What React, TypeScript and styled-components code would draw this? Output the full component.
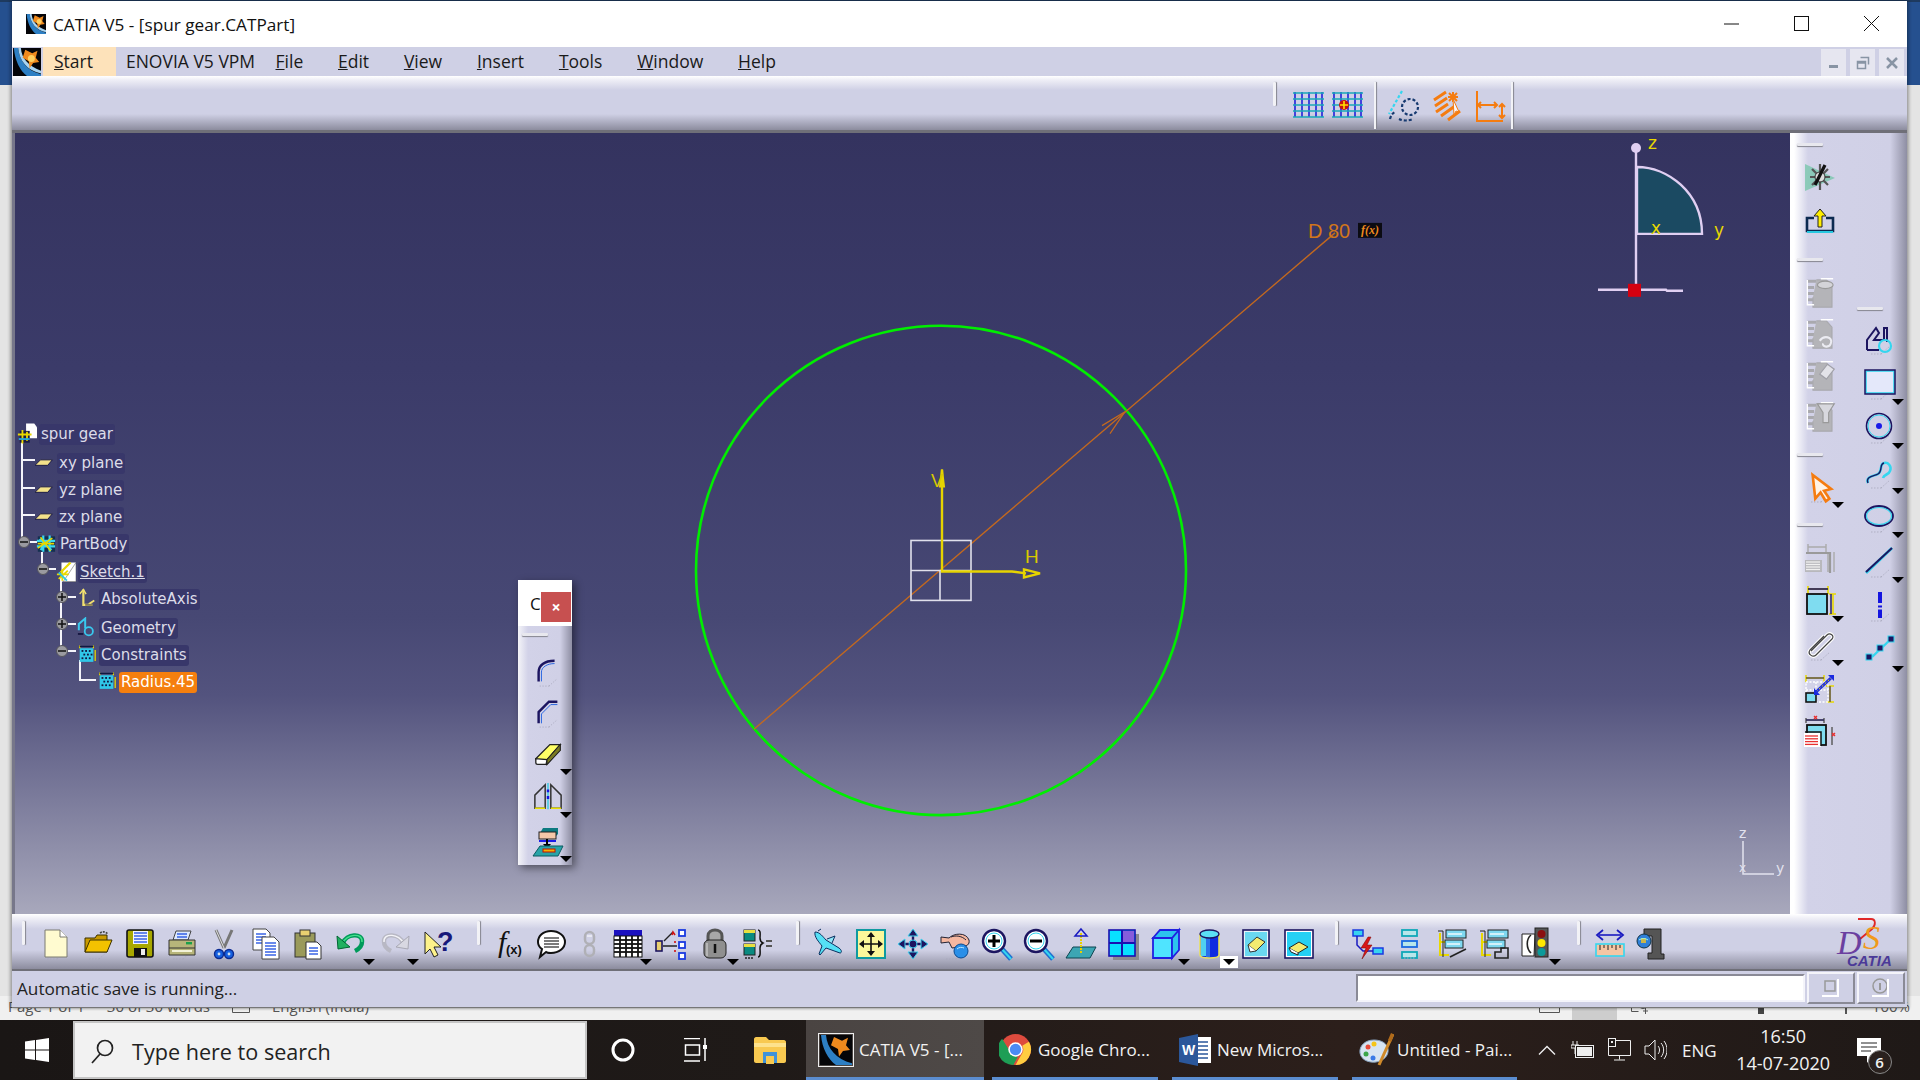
import React from 'react';
import styled, { createGlobalStyle } from 'styled-components';

const Global = createGlobalStyle`
  html, body { margin: 0; padding: 0; width: 1920px; height: 1080px; overflow: hidden; background: #f0f0f0; }
  #root { width: 1920px; height: 1080px; }
`;
const UI = `"Open Sans", "Noto Sans", "Liberation Sans", sans-serif`;
const Screen = styled.div`width:1920px;height:1080px;display:grid;grid-template-rows:1020px 60px;font-family:${UI};overflow:hidden;`;
const Desktop = styled.div`display:flex;flex-direction:column;background:linear-gradient(to bottom,#1e3a5f 0,#1e3a5f 2px,#25508f 2px,#25508f 85px,#e4e4e4 85px);`;
const Win = styled.div`position:relative;z-index:1;flex:none;margin:1px 13px 0 12px;height:1007px;display:flex;flex-direction:column;background:#cfd0e5;box-shadow:-2px 0 3px rgba(0,0,0,.3),2px 0 3px rgba(0,0,0,.3);border-bottom:1px solid #777;box-sizing:border-box;`;
const TitleBar = styled.div`height:46px;flex:none;background:#fff;display:flex;align-items:center;padding-left:14px;font-size:17.2px;color:#111;`;
const Caption = styled.span`margin-left:7px;`;
const WinControls = styled.div`margin-left:auto;display:flex;height:100%;`;
const WinBtn = styled.div`width:70px;display:flex;align-items:center;justify-content:center;`;
const MenuBar = styled.div`height:29px;flex:none;display:flex;align-items:stretch;background:#cfd0e5;font-size:17.5px;color:#1a1a1a;`;
const MenuLogo = styled.div`width:30px;margin-left:1px;display:flex;align-items:center;`;
const MenuItem = styled.div<{$active?:boolean;$pad:string}>`display:flex;align-items:center;padding:${p=>p.$pad};background:${p=>p.$active?'#fde2ba':'transparent'};`;
const MiniControls = styled.div`margin-left:auto;display:flex;gap:4px;padding:2px 3px 0 0;`;
const MiniBtn = styled.div`width:25px;background:#e6e6f0;display:flex;align-items:center;justify-content:center;`;
const TopBar = styled.div`height:57px;flex:none;box-sizing:border-box;border-bottom:3px solid #6f6f78;display:flex;align-items:flex-start;justify-content:flex-end;padding:6px 394px 0 0;background:linear-gradient(to bottom,#fff 0,#eeeef6 4px,#cfd0e5 14px,#cfd0e5 38px,#8c8c9e 54px);`;
const Middle = styled.div`flex:1;min-height:0;display:flex;padding-left:3px;background:#77778a;`;
const Canvas = styled.div`position:relative;flex:1;overflow:hidden;background:linear-gradient(to bottom,#34335f 0,#3b3b69 30%,#474874 62%,#53537e 72%,#8a8aa6 90%,#a8a8bc 100%);`;
const Drawing = styled.svg`position:absolute;inset:0;width:100%;height:100%;`;
const Side = styled.div`width:117px;flex:none;display:flex;background:linear-gradient(to right,#fff 0,#fff 4px,#d2d2e8 18px,#d0d0e6 100px,#8e8ea3 117px);`;
const SideCol = styled.div<{$w:number;$top:number}>`width:${p=>p.$w}px;flex:none;display:flex;flex-direction:column;padding-top:${p=>p.$top}px;`;
const Cell = styled.div<{$w:number;$h:number}>`position:relative;flex:none;width:${p=>p.$w}px;height:${p=>p.$h}px;display:flex;align-items:center;justify-content:center;svg{overflow:visible;}`;
const DropMark = styled.span<{$white?:boolean}>`position:absolute;left:50%;top:50%;margin:15px 0 0 12px;width:0;height:0;border:6px solid transparent;border-top:6px solid #000;border-bottom:0;${p=>p.$white?'outline:3px solid #fff;background:#fff;':''}`;
const HGrip = styled.div<{$ml:number;$mt:number;$mb:number;$w?:number}>`flex:none;width:${p=>p.$w??26}px;height:3px;margin:${p=>p.$mt}px 0 ${p=>p.$mb}px ${p=>p.$ml}px;background:#e8e8ee;box-shadow:0 1px 1px #85858f;border-radius:1px;`;
const VGrip = styled.div<{$ml:number;$mr:number;$mt?:number}>`flex:none;align-self:flex-start;width:3px;height:24px;margin:${p=>p.$mt??0}px ${p=>p.$mr}px 0 ${p=>p.$ml}px;background:#f2f2f6;box-shadow:1px 0 1px #85858f;border-radius:1px;`;
const VSep = styled.div<{$ml:number;$mr:number}>`flex:none;width:2px;height:47px;margin:0 ${p=>p.$mr}px 0 ${p=>p.$ml}px;background:#f2f2f6;box-shadow:1px 0 1px #85858f;`;
const TopTools = styled.div`display:flex;align-items:center;height:47px;`;
const BottomBar = styled.div`height:57px;flex:none;box-sizing:border-box;border-bottom:2px solid #6f6f78;display:flex;align-items:flex-start;padding:9px 0 0 10px;background:linear-gradient(to bottom,#fff 0,#f0f0f7 4px,#cfd0e5 15px,#cfd0e5 36px,#8c8c9e 55px);`;
const BGroup = styled.div`display:flex;align-items:center;height:42px;`;
const DSBox = styled.div`margin-left:auto;margin-right:9px;margin-top:-5px;`;
const StatusBar = styled.div`flex:none;height:36px;display:flex;align-items:center;padding:0 2px 2px 5px;box-sizing:border-box;font-size:17.2px;color:#222;`;
const StatusInput = styled.div`margin-left:auto;width:449px;height:28px;box-sizing:border-box;background:#fff;border:2px solid;border-color:#8a8a96 #f4f4fa #f4f4fa #8a8a96;`;
const StatusBtn = styled.div`width:48px;height:32px;margin-left:2px;box-sizing:border-box;border:2px solid;border-color:#f4f4fa #8a8a96 #8a8a96 #f4f4fa;display:flex;align-items:center;justify-content:center;`;
const FloatBar = styled.div`position:absolute;left:503px;top:447px;width:54px;height:285px;display:flex;flex-direction:column;box-shadow:3px 3px 8px rgba(0,0,0,.45);background:linear-gradient(to right,#f4f4f8 0,#d2d2e8 10px,#d0d0e6 42px,#8e8ea3 54px);`;
const FloatHead = styled.div`height:46px;flex:none;background:#fff;display:flex;align-items:center;padding:0 1px 0 12px;font-size:17px;color:#111;justify-content:space-between;`;
const FloatClose = styled.div`width:30px;height:30px;margin-top:8px;background:#c75050;color:#fff;font-size:16px;font-weight:700;display:flex;align-items:center;justify-content:center;`;
const Tree = styled.div`position:absolute;left:0;top:288px;width:240px;font-family:"DejaVu Sans",sans-serif;font-size:15px;color:#dcdce8;`;
const TreeLines = styled.svg`position:absolute;left:0;top:0;`;
const TreeRow = styled.div<{$indent:number;$mb?:number}>`position:relative;height:27.1px;display:flex;align-items:center;gap:2px;padding-left:${p=>p.$indent}px;margin-bottom:${p=>p.$mb??0}px;`;
const TreeLabel = styled.span<{$on?:boolean;$ul?:boolean}>`padding:0 2px;height:21px;line-height:21px;border-radius:3px;white-space:nowrap;background:${p=>p.$on?'#f57f0e':'#38376a'};color:${p=>p.$on?'#fff':'#dcdce8'};${p=>p.$ul?'text-decoration:underline;':''}`;
const WordStrip = styled.div`position:relative;z-index:0;margin-top:-12px;height:24px;flex:none;box-sizing:border-box;background:#f0f0f0;display:flex;align-items:center;padding:0 10px 4px 0;font-size:15px;color:#555;overflow:hidden;`;
const WordText = styled.span<{$ml:number}>`margin-left:${p=>p.$ml}px;white-space:nowrap;`;
const WordGlyph = styled.svg<{$ml:string}>`flex:none;margin-left:${p=>p.$ml};`;
const WordTile = styled.span`flex:none;margin:-4px 0 -4px 12px;width:45px;height:28px;background:#cdcdcd;`;
const Taskbar = styled.div`display:flex;align-items:stretch;background:linear-gradient(to right,#1a1615 0,#1f1a18 40%,#2c1f1b 70%,#1f1917 100%);color:#f2f2f2;font-size:17px;`;
const TaskCell = styled.div<{$w:number}>`width:${p=>p.$w}px;flex:none;display:flex;align-items:center;justify-content:center;`;
const SearchBox = styled.div`width:514px;flex:none;box-sizing:border-box;margin:1px 0;border:2px solid #c5c5c5;background:#f2f2f2;display:flex;align-items:center;padding:2px 0 0 15px;gap:17px;color:#222;font-size:21.6px;`;
const AppBtn = styled.div<{$w:number;$ml:number;$active?:boolean;$gap?:number}>`width:${p=>p.$w}px;margin-left:${p=>p.$ml}px;flex:none;box-sizing:border-box;border-bottom:3px solid #5b8dd0;display:flex;align-items:center;gap:${p=>p.$gap??6}px;padding:2px 0 0 ${p=>p.$active?12:7}px;background:${p=>p.$active?'linear-gradient(to right,#4a4442,#4e4947)':'transparent'};white-space:nowrap;`;
const Tray = styled.div`flex:1;display:flex;align-items:center;`;
const TrayIcon = styled.div<{$ml:number}>`margin-left:${p=>p.$ml}px;display:flex;align-items:center;`;
const Clock = styled.div`margin-left:19px;width:95px;display:flex;flex-direction:column;align-items:center;gap:3px;padding-bottom:2px;font-size:18px;line-height:24px;`;
const Notify = styled.div`position:relative;margin-left:26px;width:36px;height:36px;box-sizing:border-box;padding-top:6px;`;
const Badge = styled.span`position:absolute;right:1px;bottom:-6px;width:24px;height:24px;border-radius:50%;border:1px solid #888;background:#2a211e;box-sizing:border-box;display:flex;align-items:center;justify-content:center;font-size:15px;font-weight:600;`;

const Sh = () => <path d="M7 31h12M17 31l9-8" stroke="#a8a8bc" strokeDasharray="1.5 1.5" fill="none" opacity=".8" />;
const N = '#1c1560', C = '#35d6ef';
const lines = (x: number, y: number, w: number, n: number, c = '#1a4be0', gap = 3) => Array.from({ length: n }, (_, i) => <path key={i} d={`M${x} ${y + i * gap}h${w}`} stroke={c} strokeWidth="1.3" />);
const grid = (c1: string, c2: string) => <g strokeWidth="1.5">{[3, 10, 17, 24, 30].map(v => <path key={v} d={`M${v} 2V27`} stroke={c1} />)}{[3, 9, 15, 21, 27].map(v => <path key={v} d={`M1 ${v}H32`} stroke={c2} />)}</g>;
const grayBase = <g fill="none" stroke="#a9a9ae"><path d="M3 5h8M3 10h6M3 15h8M3 20h6" strokeWidth="2.4" /><path d="M11 4h9l5 5v17H8V18" fill="#b4b4b8" strokeWidth="1" /><path d="M3 4v20h6" stroke="#fff" strokeWidth="1.2" /><path d="M15 3h11" stroke="#fff" strokeWidth="1.2" /></g>;
const Tall = ({ children }: { children: React.ReactNode }) => <g transform="translate(0 -1) scale(1.12 1.24)">{children}</g>;

const icons: Record<string, React.ReactNode> = {
  new: <><Sh /><path d="M5 2h15l7 7v20H5z" fill="#fffbd0" stroke="#7b7b70" /><path d="M20 2v7h7" fill="#fff" stroke="#7b7b70" /></>,
  open: <><Sh /><path d="M3 10h10l2-3h10v17H3z" fill="#c99a00" stroke="#3a3000" /><path d="M18 5c3-2 6-1 8 1" stroke="#444" fill="none" strokeDasharray="2 1" strokeWidth="1.6" /><path d="M3 24l5-12h22l-5 12z" fill="#f3c200" stroke="#3a3000" /></>,
  save: <><rect x="3" y="2" width="26" height="27" rx="2" fill="#a8a800" stroke="#111" strokeWidth="1.6" /><rect x="9" y="3" width="15" height="13" fill="#f2f4ff" />{lines(10, 5, 13, 4)}<rect x="10" y="20" width="13" height="9" fill="#111" /><rect x="17" y="21" width="4" height="6" fill="#eee" /></>,
  print: <><Sh /><path d="M10 3h15l-3 9H7z" fill="#dce8ff" stroke="#444" />{lines(11, 6, 10, 2)}<path d="M3 12h26v15H3z" fill="#b7b57a" stroke="#333" /><path d="M3 20h26" stroke="#333" /><rect x="20" y="14" width="6" height="2.4" fill="#1aa04a" /><path d="M6 23h20" stroke="#f2f2d8" strokeWidth="2" /></>,
  cut: <><path d="M8 2l8 18M24 2l-8 18" stroke="#777" strokeWidth="3" fill="none" /><path d="M8 2l8 18" stroke="#ddd" strokeWidth="1" /><circle cx="11" cy="26" r="4.5" fill="#1660e0" stroke="#0b2a90" strokeWidth="1.4" /><circle cx="21" cy="26" r="4.5" fill="#1660e0" stroke="#0b2a90" strokeWidth="1.4" /><circle cx="11" cy="26" r="1.4" fill="#cde" /><circle cx="21" cy="26" r="1.4" fill="#cde" /></>,
  copy: <><path d="M3 1h13l4 4v17H3z" fill="#fff" stroke="#444" />{lines(6, 6, 10, 4)}<path d="M12 9h12l5 5v17H12z" fill="#fff" stroke="#444" />{lines(15, 15, 11, 5)}</>,
  paste: <><rect x="3" y="5" width="20" height="24" fill="#9a9a5a" stroke="#333" /><rect x="8" y="2" width="10" height="6" fill="#e8d070" stroke="#333" /><path d="M14 14h11l4 4v13H14z" fill="#fff" stroke="#333" />{lines(17, 20, 9, 3)}</>,
  undo: <><path d="M8 15c3-9 20-11 19-1 0 4-3 7-7 9" stroke="#009a5a" strokeWidth="4.4" fill="none" /><path d="M8 15c3-9 20-11 19-1" stroke="#45e08c" strokeWidth="1.4" fill="none" /><path d="M2 8l1 13 12-2z" fill="#20b060" stroke="#063" /></>,
  redo: <><path d="M24 15c-3-9-20-11-19-1 0 4 3 7 7 9" stroke="#b8b8c4" strokeWidth="4.4" fill="none" /><path d="M24 15c-3-9-20-11-19-1" stroke="#f4f4f8" strokeWidth="1.4" fill="none" /><path d="M30 8l-1 13-12-2z" fill="#d8d8e2" stroke="#a8a8b4" /></>,
  help: <><path d="M2 4v22l5-5 4 8 4-2-4-8h7z" fill="#fdf28a" stroke="#222" /><text x="14" y="23" fontFamily="Liberation Sans,sans-serif" fontWeight="700" fontSize="27" fill="#17187a">?</text></>,
  fx: <><text x="4" y="24" fontFamily="Liberation Serif,serif" fontStyle="italic" fontSize="30" fill="#111">f</text><text x="12" y="26" fontFamily="Liberation Sans,sans-serif" fontWeight="700" fontSize="13" fill="#111">(x)</text></>,
  comment: <><path d="M15 3c8 0 14 5 14 11s-6 11-14 11c-2 0-4 0-5-1l-6 5 2-8C3 19 2 17 2 14 2 8 7 3 15 3z" fill="#fff" stroke="#111" strokeWidth="2" />{lines(8, 10, 15, 4, '#333', 3)}</>,
  chain: <><g fill="none" stroke="#b0b0b6" strokeWidth="2.5"><rect x="11" y="4" width="9" height="12" rx="4.5" /><rect x="11" y="17" width="9" height="11" rx="4.5" /></g><path d="M13 8h5" stroke="#fff" /></>,
  table: <><rect x="2" y="2" width="28" height="6" fill="#1a10c0" /><rect x="2" y="8" width="28" height="21" fill="#fff" stroke="#111" /><g stroke="#111" strokeWidth="1.8">{[8, 14, 20, 26].map(v => <path key={v} d={`M${v} 8v21`} />)}{[12, 16, 20, 24].map(v => <path key={v} d={`M2 ${v}h28`} />)}</g></>,
  nodes: <><rect x="1" y="13" width="6" height="10" fill="#e8d070" stroke={N} strokeWidth="1.6" />{[[24, 2], [24, 14], [24, 25]].map(([x, y]) => <rect key={y} x={x} y={y} width="6" height="6" fill="#fff" stroke="#1a3ae0" strokeWidth="1.8" />)}<path d="M8 18h14M9 13l9-9" stroke="#222" strokeWidth="1.4" /><path d="M17 7l1-3 2 3M20 13v2M20 22v2" stroke="#d01010" strokeWidth="1.6" fill="none" /></>,
  lock: <><path d="M9 14V8c0-8 14-8 14 0v6" fill="#a8a8a8" stroke="#555" strokeWidth="3" /><rect x="5" y="12" width="22" height="18" rx="5" fill="#8f8f8f" stroke="#222" /><path d="M16 16v9" stroke="#111" strokeWidth="2.5" /><path d="M8 15v13" stroke="#ddd" /></>,
  formula: <><rect x="2" y="2" width="11" height="11" fill="#0a8a80" stroke="#222" /><rect x="2" y="2" width="11" height="3" fill="#e8e040" /><rect x="2" y="16" width="11" height="11" fill="#0a8a80" stroke="#222" /><rect x="2" y="16" width="11" height="3" fill="#e8e040" /><path d="M16 2c3 0 2 5 2 8s1 4 3 5c-2 1-3 2-3 5s1 9-2 9" fill="none" stroke="#111" strokeWidth="1.5" /><path d="M24 13h6M24 18h6" stroke="#555" strokeWidth="1.8" /><path d="M3 30h8" stroke="#222" strokeDasharray="2 1" strokeWidth="1.6" /></>,
  fly: <><Sh /><path d="M2 4c5 0 8 5 11 8l13 8c3 2 3 5 1 5L13 20 7 27l-1-1 3-8C6 14 1 9 2 4z" fill="#55e0f5" stroke="#0a3060" /><path d="M14 11l8-3-3 7M5 3l3-2" stroke="#0a3060" fill="#8fe8f8" /></>,
  fit: <><rect x="2" y="2" width="28" height="28" fill="#fbf79a" stroke="#0f9aa0" strokeWidth="2" /><g stroke="#111" strokeWidth="1.6"><path d="M16 6v20M6 16h20" /></g><g fill="#111"><path d="M16 4l4 5h-8zM16 28l4-5h-8zM4 16l5-4v8zM28 16l-5-4v8z" /></g></>,
  pan: <><path d="M16 6v20M6 16h20" stroke={N} strokeWidth="2.4" /><g fill={N} stroke="#3fd0ec"><path d="M16 1l5 7H11zM16 31l5-7H11zM1 16l7-5v10zM31 16l-7-5v10z" /><circle cx="16" cy="16" r="4" /></g></>,
  rotate: <><Sh /><path d="M2 9l8 1c5-5 17-6 20 2 1 5-3 6-5 6l-5 1-7 1-3-6-8 1z" fill="#f5b7a0" stroke="#223" /><path d="M12 9c5-2 11-1 15 3" stroke="#223" fill="none" /><circle cx="22" cy="23" r="7" fill="#2a8fe8" stroke="#0b4a90" /><path d="M18 21c2-2 5-2 7-1" stroke="#bfe8ff" fill="none" /></>,
  zoomin: <><path d="M20 20l10 11" stroke="#1f6fd0" strokeWidth="5" /><path d="M20 20l10 11" stroke={C} strokeWidth="2" /><circle cx="13" cy="13" r="11" fill="#fff" stroke={N} strokeWidth="2.4" /><circle cx="13" cy="13" r="8" fill="none" stroke={C} /><path d="M7 13h12M13 7v12" stroke="#000" strokeWidth="3" /></>,
  zoomout: <><path d="M20 20l10 11" stroke="#1f6fd0" strokeWidth="5" /><path d="M20 20l10 11" stroke={C} strokeWidth="2" /><circle cx="13" cy="13" r="11" fill="#fff" stroke={N} strokeWidth="2.4" /><circle cx="13" cy="13" r="8" fill="none" stroke={C} /><path d="M7 13h12" stroke="#000" strokeWidth="3" /></>,
  normal: <><path d="M1 30l7-11h23l-6 11z" fill="#3ca6b4" stroke="#0d4450" /><path d="M16 5v20" stroke="#e8d000" strokeWidth="2" strokeDasharray="2 1" /><path d="M16 1l6 7h-12z" fill="none" stroke="#1a1ac0" strokeWidth="1.5" /></>,
  views: <><rect x="6" y="6" width="26" height="26" fill="#8a8a90" /><rect x="2" y="2" width="26" height="26" fill="#08e0ff" stroke="#1a10b0" strokeWidth="1.6" /><path d="M15 2v26M2 15h26" stroke="#1a10b0" strokeWidth="2" /><rect x="16" y="3" width="11" height="11" fill="#b030d0" opacity=".75" /></>,
  cube: <><path d="M3 10h19v20H3z" fill="#4fe4ff" stroke="#2020e0" strokeWidth="1.8" /><path d="M3 10l7-8h19l-7 8zM22 10l7-8v20l-7 8z" fill="#2cc4ee" stroke="#2020e0" strokeWidth="1.8" /></>,
  cyl: <><path d="M5 6v21c0 4 19 4 19 0V6" fill="#0f2ce0" stroke="#e8e060" strokeWidth="1.6" /><rect x="6" y="6" width="5" height="22" fill="#50d0f0" /><rect x="11" y="6" width="4" height="23" fill="#2a70ea" /><ellipse cx="14.5" cy="6" rx="9.5" ry="4" fill="#5be0f5" stroke={N} strokeWidth="1.4" /></>,
  hide: <><rect x="3" y="2" width="26" height="28" fill="#e8f4f8" stroke={N} strokeWidth="1.6" /><rect x="5" y="4" width="22" height="24" fill="#6ad8f0" /><path d="M8 17l9-8 8 5-9 9z" fill="#f4ec70" stroke="#333" /><path d="M8 17l2 7 6-1" fill="#fff" stroke="#333" /></>,
  show: <><rect x="2" y="2" width="28" height="28" fill="#fff" stroke={N} strokeWidth="1.6" /><rect x="4" y="4" width="24" height="24" fill="#25d0f4" /><path d="M6 20l10-6 9 5-10 6z" fill="#f4ec70" stroke="#222" /><path d="M6 20l2 4 7 3v-2" fill="#fff" stroke="#222" /></>,
  flash: <><rect x="1" y="2" width="10" height="6" fill="#38d4ef" stroke="#1a3ae0" strokeWidth="1.5" /><rect x="21" y="20" width="10" height="6" fill="#38d4ef" stroke="#1a3ae0" strokeWidth="1.5" /><path d="M5 8v9l6 6h10" stroke="#1a1ac0" fill="none" strokeWidth="1.5" /><path d="M16 9L9 20h5l-4 11 10-14h-5l4-8z" fill="#d81818" stroke="#700" strokeWidth=".5" /></>,
  stack: <>{[2, 13, 24].map(y => <g key={y}><rect x="8" y={y} width="15" height="6" fill="#b8e6ea" stroke={y === 13 ? '#1a6ae0' : '#10a8b8'} strokeWidth="1.8" /></g>)}<path d="M10 30h11" stroke="#a8a8bc" strokeDasharray="1.5 1.5" /></>,
  steps1: <><path d="M4 5v22h9M4 14h7" stroke="#e8d800" strokeWidth="2" fill="none" /><path d="M2 3h5v26" stroke="#222" fill="none" /><rect x="10" y="2" width="20" height="8" fill="#7fd8f0" stroke="#222" /><rect x="9" y="12" width="18" height="8" fill="#7fd8f0" stroke="#222" />{lines(12, 6, 14, 1, '#fff')}{lines(11, 16, 13, 1, '#fff')}<path d="M14 29l16-8" stroke="#222" strokeWidth="1.6" /></>,
  steps2: <><path d="M4 5v22h9M4 14h7" stroke="#e8d800" strokeWidth="2" fill="none" /><path d="M2 3h5v26" stroke="#222" fill="none" /><rect x="10" y="2" width="20" height="8" fill="#7fd8f0" stroke="#222" /><rect x="9" y="12" width="18" height="8" fill="#7fd8f0" stroke="#222" />{lines(12, 6, 14, 1, '#fff')}{lines(11, 16, 13, 1, '#fff')}<path d="M17 30v-6h6v-4h7v10z" fill="none" stroke="#222" strokeWidth="1.6" /></>,
  light: <><path d="M1 6h13l-1 22H1z" fill="#fff" stroke="#222" /><path d="M10 7C5 11 5 20 10 25" stroke="#222" fill="none" strokeWidth="1.6" /><rect x="14" y="0" width="13" height="29" fill="#555" stroke="#222" /><circle cx="20.5" cy="6" r="4" fill="#8a1010" /><circle cx="20.5" cy="15" r="4" fill="#ffe800" /><circle cx="20.5" cy="24" r="4" fill="#0c9a9a" /></>,
  measure: <><path d="M5 7h22" stroke="#1a1ac0" strokeWidth="1.6" /><path d="M9 2L3 7l6 5M23 2l6 5-6 5" stroke="#1a1ac0" fill="none" strokeWidth="1.8" /><rect x="2" y="16" width="28" height="12" fill="#f5c6a4" stroke={C} strokeWidth="1.6" /><path d="M6 17v5M10 17v3M14 17v5M18 17v3M22 17v5M26 17v3" stroke="#222" /></>,
  clamp: <><path d="M8 1h17v25h3v5H12v-6h4V8H8z" fill="#555" stroke="#222" /><circle cx="8" cy="13" r="7" fill="#2f7fd8" stroke="#134" /><path d="M5 10h5v5H5z" fill="#e8c030" opacity=".85" /><path d="M3 12c3-2 6-2 9 0" stroke="#9fe" fill="none" /></>,
  grid: grid('#1414d8', '#18a8b8'),
  gridsnap: <>{grid('#1414d8', '#18a8b8')}<circle cx="13" cy="15" r="5" fill="#c81010" /><path d="M13 11v8M9 15h8" stroke="#ffe000" strokeWidth="1.6" /></>,
  sketchOut: <><g fill="none" strokeDasharray="3 2" strokeWidth="2.2"><path d="M14 1L1 24" stroke={C} /><circle cx="22" cy="17" r="8" stroke="#173a70" /><path d="M2 29c1-4 3-6 5-7M11 29c4 2 9 2 14 0" stroke="#173a70" /></g></>,
  handOrange: <><g stroke="#f57c10" strokeWidth="3" fill="none"><path d="M1 10l12-8M2 16l12-8M3 22l12-8M8 26l14-10M15 30l12-9" /></g><path d="M20 2v10M15 7h10M16 3l8 8M24 3l-8 8" stroke="#f57c10" strokeWidth="2" /><path d="M20 9l6 13-3-1-2 4z" fill="#f8f8ff" stroke="#f57c10" /></>,
  dimsOrange: <><g stroke="#f57c10" strokeWidth="2" fill="none"><path d="M2 1v30h26" /><path d="M4 15h18M6 12l-3 3 3 3M19 12l3 3-3 3" /><path d="M27 14v14M24 17l3-3 3 3M24 25l3 3 3-3" /></g></>,
  star: <><path d="M1 3l30 14L1 30z" fill="#7fc8b0" opacity=".85" /><path d="M16 3v26M6 16h20M8 8l16 16M24 8L8 24" stroke="#555" strokeWidth="2.2" /><circle cx="16" cy="16" r="5" fill="#ddd" stroke="#333" /><path d="M11 24L21 4" stroke="#111" strokeWidth="3.2" /></>,
  exit: <><path d="M10 12H3v13h26V12h-7" fill="none" stroke="#0c2a50" strokeWidth="2.6" /><path d="M3 26h26" stroke="#28c8e0" strokeWidth="2" /><path d="M16 3l-6 7h4v11h4V10h4z" fill="#ffee00" stroke="#222" /></>,
  gray1: <Tall>{grayBase}<ellipse cx="19" cy="8" rx="7" ry="3" fill="#d4d4d8" stroke="#999" /></Tall>,
  gray2: <Tall>{grayBase}<path d="M14 20c4-5 12-3 10 2-1 4-8 3-7 0" stroke="#ececf2" fill="none" strokeWidth="1.8" /></Tall>,
  gray3: <Tall>{grayBase}<path d="M14 13l7-8 6 4-7 8z" fill="#e2e2e8" stroke="#a0a0a8" /></Tall>,
  gray4: <Tall>{grayBase}<path d="M12 4h15l-5 7v8h-5v-8z" fill="#d8d8de" stroke="#999" /></Tall>,
  grayDim: <><g fill="none" stroke="#aaa" strokeWidth="1.4"><path d="M4 2v10M22 2v10M4 5h18M30 10v20M24 10v20" /><path d="M2 11h24v20" stroke="#9a9a9a" strokeWidth="2.2" /></g><rect x="1" y="18" width="17" height="12" fill="#b8b8bc" />{lines(2, 20, 14, 4, '#f0f0f0', 2.5)}</>,
  cursor: <><Sh /><g transform="translate(6 3) scale(.88)"><path d="M3 1l3 27 6-7 6 10 4-3-6-9 8-2z" fill="#fff3e6" stroke="#f57c10" strokeWidth="3" /></g></>,
  cons: <><path d="M4 1v8M24 1v8M4 4h20" stroke="#e8d800" strokeWidth="1.6" /><path d="M4 4h20" stroke={N} strokeWidth="1.6" /><path d="M25 9h7M25 29h7M29 9v20" stroke="#e8d800" strokeWidth="1.6" /><path d="M27 9v20" stroke={N} strokeWidth="1.4" /><rect x="3" y="9" width="20" height="20" fill="#7fdcf0" stroke="#101010" strokeWidth="1.8" /></>,
  clip: <><Sh /><path d="M7 22L23 6c3-3 8 1 5 4L12 26c-3 3-9-1-6-5L20 7" fill="none" stroke="#fff" strokeWidth="3.4" /><path d="M7 22L23 6c3-3 8 1 5 4L12 26c-3 3-9-1-6-5L20 7" fill="none" stroke="#444" strokeWidth="1.2" /></>,
  anim: <><path d="M2 3v7M20 3v7M2 6h18" stroke="#e8d800" strokeWidth="1.5" /><path d="M2 6h18" stroke={N} /><path d="M26 14v16M22 14h8M22 30h8" stroke="#e8d800" strokeWidth="1.5" /><path d="M26 14v16" stroke={N} /><g fill="none" stroke="#fff" strokeDasharray="2 1.5" strokeWidth="1.4"><rect x="2" y="10" width="22" height="20" /><path d="M2 18h22M12 10v20" /></g><rect x="2" y="21" width="10" height="9" fill="#7fdcf0" stroke="#111" strokeWidth="1.6" /><path d="M12 20L27 6" stroke="#1a2ae0" strokeWidth="3" /><path d="M12 20L27 6" stroke="#f0e000" strokeDasharray="2 2" /><path d="M24 3h6v6zM10 23v-7l6 7z" fill="#1a2ae0" /></>,
  red: <><path d="M2 4h18M2 2v5M20 2v5M28 11v18" stroke="#555" strokeWidth="1.4" /><path d="M2 4h18" stroke={N} /><path d="M10 0l3 3M13 0l-3 3M28 17l3 3M31 17l-3 3" stroke="#e83030" strokeWidth="1.4" /><rect x="3" y="9" width="19" height="20" fill="#7fdcf0" stroke="#111" strokeWidth="1.8" /><rect x="0" y="17" width="17" height="14" fill="#fff" /><path d="M1 16h16v14" fill="none" stroke="#111" strokeWidth="1.5" />{lines(1, 20, 13, 4, '#e83030', 2.8)}</>,
  profile: <><Sh /><path d="M3 27V17L12 5l3 5-5 7h10V5h3v14" fill="none" stroke={N} strokeWidth="2" /><circle cx="21" cy="23" r="6" fill="none" stroke={C} strokeWidth="2.2" /><path d="M3 27h12" stroke={N} strokeWidth="2" /></>,
  rect: <><Sh /><rect x="2" y="3" width="28" height="22" fill="#e4e8fa" stroke={C} strokeWidth="1.6" /><rect x="1" y="2" width="30" height="24" fill="none" stroke={N} strokeWidth="1.5" /></>,
  circle: <><Sh /><circle cx="15" cy="14" r="12.5" fill="none" stroke={N} strokeWidth="1.6" /><circle cx="15" cy="14" r="11" fill="none" stroke={C} /><circle cx="15" cy="14" r="3" fill="#1a1ae8" /></>,
  spline: <><Sh /><path d="M4 26c-3-7 7-7 10-9 5-3 1-10 6-11 4-1 8 3 6 8-1 4-6 3-7 7" fill="none" stroke={C} strokeWidth="2.6" /><path d="M4 26c-3-7 7-7 10-9 5-3 1-10 6-11" fill="none" stroke={N} strokeWidth="1.4" /></>,
  ellipse: <><Sh /><ellipse cx="15" cy="15" rx="14" ry="10" fill="none" stroke={N} strokeWidth="1.8" /><ellipse cx="15" cy="15" rx="12.5" ry="8.5" fill="none" stroke={C} strokeWidth="1.2" /></>,
  line: <><Sh /><path d="M2 27L28 2" stroke={C} strokeWidth="3" /><path d="M2 26L28 2" stroke={N} strokeWidth="2" /></>,
  axis: <><Sh /><path d="M16 2v26" stroke="#1414e0" strokeWidth="4" strokeDasharray="11 2.5 2 2" /></>,
  point: <><g transform="translate(0 -2)"><path d="M8 24L27 6" stroke={C} strokeWidth="2.4" /><rect x="2" y="21" width="6" height="6" fill={N} stroke={C} /><rect x="13" y="12" width="6" height="6" fill={N} stroke={C} /><rect x="24" y="3" width="6" height="6" fill={N} stroke={C} /></g></>,
  fillet: <><Sh /><path d="M6 26V16c0-7 6-12 17-12" fill="none" stroke={N} strokeWidth="2.6" /><path d="M9 26V16c0-5 6-9 14-9" fill="none" stroke="#2060e0" /></>,
  chamfer: <><Sh /><path d="M6 27V15L17 4h9" fill="none" stroke={N} strokeWidth="2.6" /><path d="M9 27V17L19 7h7" fill="none" stroke="#2060e0" /></>,
  eraser: <><path d="M3 21L18 6h11L15 22H3z" fill="#ffff66" stroke="#222" strokeWidth="1.4" /><path d="M3 21v4c0 1 1 2 2 2h9l1-5zM15 22v5L29 12V6z" fill="#fff" stroke="#222" strokeWidth="1.4" /><path d="M15 27L29 12V6L15 22z" fill="#7a7a20" stroke="#222" /></>,
  mirror: <><path d="M16 1v28" stroke="#28c8e0" strokeWidth="1.4" /><path d="M16 8v3M16 15v3" stroke="#1414e0" strokeWidth="2.6" /><path d="M13 3v25H2V14z" fill="none" stroke="#333" strokeWidth="1.6" /><path d="M19 3v25h11V14z" fill="none" stroke="#333" strokeWidth="1.6" /><path d="M13 28H2M19 28h11" stroke="#e8e000" strokeWidth="1.6" /></>,
  project: <><path d="M8 8l3-5h15v6l-3 3H8z" fill="#0d7a80" /><rect x="7" y="7" width="17" height="7" fill="#f5c8a8" stroke="#222" /><path d="M7 16h17" stroke="#1a1ae8" strokeWidth="2" /><path d="M15 14v8" stroke="#000" strokeWidth="2" /><path d="M11 19l4 5 4-5z" fill="#000" /><path d="M1 31L8 21h23l-5 10z" fill="#28a4a8" stroke="#0b5a60" /><rect x="11" y="24" width="12" height="3" fill="#f5b000" stroke="#c01000" /></>,
};

type T = { i?: string; w?: number; h?: number; d?: boolean | 'w'; s?: number };
const Tool = ({ i, w = 42, h = 42, d, s = 32 }: T) => (
  <Cell $w={w} $h={h}>
    {i && <svg width={s} height={s} viewBox="0 0 32 32">{icons[i]}</svg>}
    {d && <DropMark $white={d === 'w'} />}
  </Cell>
);

const CatiaLogo = ({ size }: { size: number }) => (
  <svg width={size} height={size} viewBox="0 0 32 32">
    <rect width="32" height="32" fill="#050508" />
    <path d="M6 0c1 14 10 26 26 30v2H16C8 26 2 14 1 0z" fill="#2d7fc4" />
    <path d="M9 0c1 12 8 20 23 26v3C16 26 7 14 6 0z" fill="#a8d4f2" />
    <path d="M14 2l8 4 6-3-2 8 4 5-7 1-4 6-1-8-7-4z" fill="#ef8a1e" />
    <circle cx="21" cy="12" r="4" fill="#ffd060" />
  </svg>
);

const Sketch = () => (
  <Drawing viewBox="15 133 1775 782" preserveAspectRatio="none">
    <circle cx="941" cy="571" r="245" fill="none" stroke="#00ee00" strokeWidth="2.6" />
    <path d="M754 730L1335 233" stroke="#c4691e" strokeWidth="1.4" />
    <path d="M1125 412l-23 14M1125 412l-15 22" stroke="#c4691e" strokeWidth="1.2" fill="none" />
    <g fill="none" stroke="#e0e0ec" strokeWidth="1.6">
      <rect x="911" y="541" width="60" height="60" />
      <path d="M911 571h60M940 571v30" />
    </g>
    <path d="M942 470v102h70l14 2" stroke="#e6d400" strokeWidth="2.4" fill="none" />
    <path d="M1024 570l16 4-16 4z" fill="none" stroke="#e6d400" strokeWidth="2.4" />
    <path d="M940 487l2-17 2 17z" fill="none" stroke="#e6d400" strokeWidth="2" />
    <text x="931" y="487" fontFamily="Liberation Sans,sans-serif" fontSize="18" fill="#d8c800">V</text>
    <text x="1025" y="564" fontFamily="Liberation Sans,sans-serif" fontSize="19" fill="#d8c800">H</text>
    <text x="1308" y="238" fontFamily="Liberation Sans,sans-serif" fontSize="20" fill="#d2761a">D 80</text>
    <rect x="1358" y="223" width="24" height="15" fill="#0b0b12" />
    <text x="1361" y="234" fontFamily="Liberation Serif,serif" fontStyle="italic" fontWeight="700" fontSize="12" fill="#f08a1e">f(x)</text>
    <path d="M1637 234V167c30 0 65 25 65 67z" fill="#1b4a62" stroke="#e0cff2" strokeWidth="2.4" />
    <path d="M1636 148V290M1598 290h68l1 1h16" stroke="#e0cff2" strokeWidth="2.4" fill="none" />
    <circle cx="1636" cy="148" r="5" fill="#e0cff2" />
    <rect x="1628" y="284" width="13" height="13" fill="#d40010" />
    <g fontFamily="DejaVu Sans,sans-serif" fontSize="17" fill="#e8d800">
      <text x="1648" y="149">z</text><text x="1651" y="234">x</text><text x="1714" y="236">y</text>
    </g>
    <path d="M1743 842v33h31" fill="none" stroke="#e2e2ee" strokeWidth="1.5" />
    <g fontFamily="DejaVu Sans,sans-serif" fontSize="14" fill="#e2e2ee">
      <text x="1739" y="839">z</text><text x="1739" y="873" fontSize="12">x</text><text x="1776" y="874">y</text>
    </g>
  </Drawing>
);

const treeIcon: Record<string, React.ReactNode> = {
  root: <><path d="M10 0h9l3 4v12H10z" fill="#fff" /><path d="M3 8h11v13H3z" fill="#1a1a40" /><path d="M1 12h15M6 7v15M11 9v10" stroke="#e8d800" strokeWidth="2" /><path d="M2 17h12" stroke="#2ad" strokeWidth="2" /></>,
  plane: <><path d="M0 14l6-6h13l-5 6z" fill="#f4e28a" stroke="#141440" /></>,
  body: <><path d="M2 3h19v17H2z" fill="#143050" /><path d="M4 6l13 12M16 5L5 18M1 8h20M1 14h20M8 2v18M15 2v18" stroke="#39d7ef" strokeWidth="2.4" /><path d="M2 16l16-11M5 4l11 15M2 11h18" stroke="#e8d800" strokeWidth="1.8" /></>,
  sketch: <><path d="M6 1h16v21H6z" fill="#fff" /><path d="M22 1L8 22h14z" fill="#fff" stroke="#333" strokeWidth=".5" /><path d="M16 1L5 12" stroke="#e8d800" strokeWidth="2.4" /><path d="M1 14h13M7 9v12M3 19l10-9" stroke="#e8d800" strokeWidth="2" /><path d="M3 12l9 9" stroke="#30c8e0" strokeWidth="2" /></>,
  axis: <><path d="M7 1v17h10" stroke="#f2e070" strokeWidth="2.4" fill="none" /><path d="M3 6l4-5 3 5" stroke="#f2e070" strokeWidth="1.6" fill="none" /><path d="M13 17l6-4" stroke="#f2e070" strokeWidth="2" /><path d="M9 18h8" stroke="#151535" strokeWidth="1" /></>,
  geom: <><path d="M2 14V7l7-6v11" fill="none" stroke="#39c8ee" strokeWidth="2.2" /><circle cx="13" cy="15" r="4.5" fill="none" stroke="#39c8ee" strokeWidth="2" /><path d="M1 18h6" stroke="#151540" strokeWidth="2" /></>,
  cons: <><rect x="3" y="4" width="15" height="15" fill="#30c8e8" /><g fill="#101840">{[5, 9, 13].map(x => [6, 10, 14].map(y => <rect key={x + '-' + y} x={x + (y === 10 ? 2 : 0)} y={y} width="2" height="2" />))}</g><path d="M3 1v3M18 1v3M20 6v12" stroke="#e8d800" strokeWidth="1.4" /><path d="M3 2h15" stroke="#101840" strokeWidth="1.4" /></>,
};
const treeRows = [
  ['root', 'spur gear', 2, 2], ['plane', 'xy plane', 20], ['plane', 'yz plane', 20], ['plane', 'zx plane', 20],
  ['body', 'PartBody', 21], ['sketch', 'Sketch.1', 41, 0, 'ul'], ['axis', 'AbsoluteAxis', 62, 2], ['geom', 'Geometry', 62],
  ['cons', 'Constraints', 62], ['cons', 'Radius.45', 82, 0, 'on'],
] as const;

const Node = ({ x, y, plus }: { x: number; y: number; plus?: boolean }) => (
  <g><circle cx={x} cy={y} r="5.5" fill="#9a9aa0" stroke="#55555c" />
    <path d={plus ? `M${x - 4} ${y}h8M${x} ${y - 4}v8` : `M${x - 4} ${y}h8`} stroke="#111" strokeWidth="1.5" /></g>
);

const ProjectTree = () => (
  <Tree>
    <TreeLines width="240" height="300" viewBox="15 421 240 300">
      <g stroke="#f4f4fa" strokeWidth="2" fill="none">
        <path d="M22 440V542M22 460h13M22 488h13M22 515h13M24 542h13" />
        <path d="M42 552V569M43 569h13" />
        <path d="M61 578V651M62 597h14M62 624h14M62 651h14" />
        <path d="M80 660V680h16" />
      </g>
      <Node x={24} y={542} /><Node x={43} y={569} /><Node x={62} y={597} plus /><Node x={62} y={624} plus /><Node x={62} y={651} />
    </TreeLines>
    {treeRows.map((r: any, k) => (
      <TreeRow key={k} $indent={r[2]} $mb={r[3]}>
        <svg width="20" height="23" viewBox="0 0 22 24">{treeIcon[r[0]]}</svg>
        <TreeLabel $on={r[4] === 'on'} $ul={r[4] === 'ul'}>{r[1]}</TreeLabel>
      </TreeRow>
    ))}
  </Tree>
);

const Pal = () => (
  <FloatBar>
    <FloatHead>C<FloatClose>×</FloatClose></FloatHead>
    <HGrip $ml={4} $mt={7} $mb={15} />
    <Tool i="fillet" w={60} h={41} s={30} />
    <Tool i="chamfer" w={60} h={41} s={30} />
    <Tool i="eraser" w={60} h={42} s={30} d />
    <Tool i="mirror" w={60} h={44} s={30} d />
    <Tool i="project" w={60} h={44} s={32} d />
  </FloatBar>
);

const leftA: T[] = [{ i: 'star', h: 42 }, { i: 'exit', h: 48 }];
const leftB: T[] = ['gray1', 'gray2', 'gray3', 'gray4'].map(i => ({ i, h: 41.5 }));
const leftD: T[] = [{ i: 'grayDim' }, { i: 'cons', d: true }, { i: 'clip', d: true }, { i: 'anim' }, { i: 'red' }];
const right: T[] = [{ i: 'profile' }, { i: 'rect', d: true }, { i: 'circle', d: true }, { i: 'spline', d: true }, { i: 'ellipse', d: true }, { i: 'line', d: true }, { i: 'axis' }, { i: 'point', d: true }];

const g1: T[] = [{ i: 'new' }, { i: 'open' }, { i: 'save' }, { i: 'print' }, { i: 'cut' }, { i: 'copy' }, { i: 'paste' }, { i: 'undo', w: 43, d: true }, { i: 'redo', w: 46, d: true }, { i: 'help' }];
const g2: T[] = [{ i: 'fx' }, { i: 'comment' }, { i: 'chain', w: 34 }, { i: 'table', d: true }, { i: 'nodes', w: 44 }, { i: 'lock', w: 43, d: true }, { i: 'formula', w: 44 }];
const g3: T[] = [{ i: 'fly' }, { i: 'fit' }, { i: 'pan' }, { i: 'rotate' }, { i: 'zoomin' }, { i: 'zoomout' }, { i: 'normal' }, { i: 'views' }, { i: 'cube', w: 44, d: true }, { i: 'cyl', w: 46, d: 'w' }, { i: 'hide', w: 44 }, { i: 'show', w: 41 }];
const g4: T[] = [{ i: 'flash' }, { i: 'stack' }, { i: 'steps1' }, { i: 'steps2' }, { i: 'light', w: 44, d: true }];
const g5: T[] = [{ i: 'measure' }, { i: 'clamp' }];
const Run = ({ list, w, h }: { list: T[]; w?: number; h?: number }) => <>{list.map((t, k) => <Tool key={k} w={w} h={h} {...t} />)}</>;

const menu: [string, string][] = [['F', 'ile'], ['E', 'dit'], ['V', 'iew'], ['I', 'nsert'], ['T', 'ools'], ['W', 'indow'], ['H', 'elp']];

const Chrome = () => (
  <svg width="33" height="33" viewBox="0 0 32 32">
    <circle cx="16" cy="16" r="15" fill="#dd4b3e" />
    <path d="M29 8.500A15 15 0 0116 31l6.500-11.250a7.500 7.500 0 000-7.500z" fill="#ffcd40" />
    <path d="M3 5.500l6.500 10.500a7.500 7.500 0 009 6.500L14 31A15 15 0 013 5.500z" fill="#1e9e55" />
    <circle cx="16" cy="16" r="7" fill="#fff" /><circle cx="16" cy="16" r="5.500" fill="#4a8bf5" />
  </svg>
);

export default function App() {
  return (
    <Screen>
      <Global />
      <Desktop>
        <Win>
          <TitleBar>
            <CatiaLogo size={20} />
            <Caption>CATIA V5 - [spur gear.CATPart]</Caption>
            <WinControls>
              <WinBtn><svg width="16" height="16"><path d="M0 8h15" stroke="#111" /></svg></WinBtn>
              <WinBtn><svg width="16" height="16"><rect x=".5" y=".5" width="14" height="14" fill="none" stroke="#111" /></svg></WinBtn>
              <WinBtn><svg width="16" height="16"><path d="M0 0l15 15M15 0L0 15" stroke="#111" /></svg></WinBtn>
            </WinControls>
          </TitleBar>
          <MenuBar>
            <MenuLogo><CatiaLogo size={28} /></MenuLogo>
            <MenuItem $active $pad="0 23px 2px 11px"><span><u>S</u>tart</span></MenuItem>
            <MenuItem $pad="0 3px 2px 10px">ENOVIA V5 VPM</MenuItem>
            {menu.map(([a, b]) => <MenuItem key={a} $pad="0 17.4px 2px"><span><u>{a}</u>{b}</span></MenuItem>)}
            <MiniControls>
              <MiniBtn><svg width="14" height="14"><rect x="2" y="9" width="9" height="3" fill="#8894a4" /></svg></MiniBtn>
              <MiniBtn><svg width="14" height="14"><path d="M4.500 1.500h8v7M1.500 5.500h8v7h-8zM1.500 7h8" fill="none" stroke="#8894a4" strokeWidth="1.500" /></svg></MiniBtn>
              <MiniBtn><svg width="14" height="14"><path d="M2 2l10 10M12 2L2 12" stroke="#8894a4" strokeWidth="2.500" /></svg></MiniBtn>
            </MiniControls>
          </MenuBar>
          <TopBar>
            <TopTools>
              <VGrip $ml={0} $mr={14} />
              <Tool i="grid" w={36} h={36} />
              <Tool i="gridsnap" w={41} h={36} />
              <VSep $ml={7} $mr={6} />
              <Tool i="sketchOut" w={44} h={36} />
              <Tool i="handOrange" w={46} h={36} />
              <Tool i="dimsOrange" w={38} h={36} />
              <VSep $ml={1} $mr={0} />
            </TopTools>
          </TopBar>
          <Middle>
            <Canvas>
              <Sketch />
              <ProjectTree />
              <Pal />
            </Canvas>
            <Side>
              <SideCol $w={60} $top={10}>
                <HGrip $ml={7} $mt={0} $mb={10} />
                <Run list={leftA} w={60} />
                <HGrip $ml={7} $mt={12} $mb={10} />
                <Run list={leftB} w={60} />
                <HGrip $ml={7} $mt={16} $mb={10} />
                <Tool i="cursor" w={60} d />
                <HGrip $ml={7} $mt={15} $mb={10} />
                <Run list={leftD} w={60} h={43.5} />
              </SideCol>
              <SideCol $w={57} $top={174}>
                <HGrip $ml={7} $mt={0} $mb={7} />
                <Run list={right} w={60} h={44.5} />
              </SideCol>
            </Side>
          </Middle>
          <BottomBar>
            <BGroup>
              <VGrip $ml={0} $mr={10} $mt={-2} />
              <Run list={g1} />
              <VGrip $ml={17} $mr={9} $mt={-2} />
              <Run list={g2} />
              <VGrip $ml={16} $mr={9} $mt={-2} />
              <Run list={g3} />
              <VGrip $ml={16} $mr={9} $mt={-2} />
              <Run list={g4} />
              <VGrip $ml={18} $mr={9} $mt={-2} />
              <Run list={g5} />
            </BGroup>
            <DSBox>
              <svg width="62" height="50" viewBox="0 0 62 50">
                <path d="M22 1h13c5 0 5 6 1 10L24 21" fill="none" stroke="#e02828" strokeWidth="1.800" />
                <text x="1" y="36" fontFamily="Liberation Serif,serif" fontStyle="italic" fontSize="34" fill="#6b3fa0">D</text>
                <text x="27" y="31" fontFamily="Liberation Serif,serif" fontStyle="italic" fontSize="34" fill="#f09a1a">S</text>
                <text x="11" y="48" fontFamily="Liberation Sans,sans-serif" fontStyle="italic" fontWeight="700" fontSize="15" fill="#4b3a98">CATIA</text>
              </svg>
            </DSBox>
          </BottomBar>
          <StatusBar>
            Automatic save is running...
            <StatusInput />
            <StatusBtn><svg width="24" height="24"><rect x="6" y="5" width="10" height="10" fill="none" stroke="#999" strokeWidth="1.500" /><path d="M3 20h16V3" fill="none" stroke="#fff" strokeWidth="2" /></svg></StatusBtn>
            <StatusBtn><svg width="24" height="24"><circle cx="11" cy="10" r="7" fill="none" stroke="#999" strokeWidth="1.500" /><path d="M11 7v7" stroke="#999" strokeWidth="2" /><path d="M3 20h16V3" fill="none" stroke="#fff" strokeWidth="2" /></svg></StatusBtn>
          </StatusBar>
        </Win>
        <WordStrip>
          <WordText $ml={8}>Page 1 of 1</WordText>
          <WordText $ml={22}>30 of 30 words</WordText>
          <WordGlyph $ml="22px" width="18" height="16"><path d="M.5 1.500h8l1 1 1-1h7v13H.5z" fill="none" stroke="#555" /></WordGlyph>
          <WordText $ml={22}>English (India)</WordText>
          <WordGlyph $ml="auto" width="21" height="16"><path d="M.5 1.500h9l1 1 1-1h9v13H.5z" fill="none" stroke="#555" /></WordGlyph>
          <WordTile />
          <WordGlyph $ml="14px" width="18" height="16"><path d="M8 1.500H.5v12h7M12 13h5M14.500 10v6" fill="none" stroke="#555" /><circle cx="12" cy="6" r="5" fill="#555" /></WordGlyph>
          <WordGlyph $ml="109px" width="6" height="16"><rect y="5" width="6" height="11" fill="#444" /></WordGlyph>
          <WordGlyph $ml="81px" width="2" height="16"><rect y="8" width="2" height="8" fill="#555" /></WordGlyph>
          <WordText $ml={25}>100%</WordText>
        </WordStrip>
      </Desktop>
      <Taskbar>
        <TaskCell $w={73}>
          <svg width="24" height="24" viewBox="0 0 24 24"><path d="M0 3.500l10-1.400V11.500H0zM11 2l13-2V11.500H11zM0 12.500h10v9.400l-10-1.400zM11 12.500h13V24l-13-2z" fill="#fff" /></svg>
        </TaskCell>
        <SearchBox>
          <svg width="25" height="25" viewBox="0 0 25 25"><circle cx="15" cy="9" r="7.500" fill="none" stroke="#222" strokeWidth="1.700" /><path d="M10 15L2 24" stroke="#222" strokeWidth="1.700" /></svg>
          Type here to search
        </SearchBox>
        <TaskCell $w={72}><svg width="24" height="24"><circle cx="12" cy="12" r="10" fill="none" stroke="#fff" strokeWidth="3" /></svg></TaskCell>
        <TaskCell $w={74}><svg width="24" height="24"><path d="M0 .5h16M1.500 7h14v10h-14zM0 23h16M21 0v7M21 11v12" fill="none" stroke="#fff" strokeWidth="1.500" /><rect x="19" y="7" width="4" height="4" fill="#fff" /></svg></TaskCell>
        <TaskCell $w={73}>
          <svg width="32" height="27" viewBox="0 0 32 27"><path d="M0 2c0-1 1-2 2-2h10l3 3h15c1 0 2 1 2 2v19c0 1-1 2-2 2H2c-1 0-2-1-2-2z" fill="#f8c950" /><path d="M0 6h32v4H0z" fill="#fde28c" /><path d="M9 15h14v11H9z" fill="#3e92d8" /><path d="M12 19h8v8h-8z" fill="#f8c950" /></svg>
        </TaskCell>
        <AppBtn $w={178} $ml={0} $active $gap={5}><svg width="36" height="34" viewBox="0 0 36 34"><rect x=".5" y=".5" width="35" height="33" fill="none" stroke="#eee" /><svg x="2" y="2" width="32" height="30" viewBox="0 0 32 32" preserveAspectRatio="none"><rect width="32" height="32" fill="#050508" /><path d="M6 0c1 14 10 26 26 30v2H16C8 26 2 14 1 0z" fill="#2d7fc4" /><path d="M14 2l8 4 6-3-2 8 4 5-7 1-4 6-1-8-7-4z" fill="#ef8a1e" /></svg></svg>CATIA V5 - [...</AppBtn>
        <AppBtn $w={166} $ml={8}><Chrome />Google Chro...</AppBtn>
        <AppBtn $w={166} $ml={14}>
          <svg width="32" height="32" viewBox="0 0 32 32"><rect x="14" y="3" width="18" height="26" fill="#fff" /><path d="M17 8h12M17 12h12M17 16h12M17 20h12M17 24h12" stroke="#2b579a" strokeWidth="1.500" /><path d="M0 4l19-4v32L0 28z" fill="#2b579a" /><text x="3" y="21" fill="#fff" fontFamily="Liberation Sans,sans-serif" fontWeight="700" fontSize="14">W</text></svg>
          New Micros...
        </AppBtn>
        <AppBtn $w={165} $ml={14} $gap={3}>
          <svg width="35" height="33" viewBox="0 0 35 33"><path d="M15 7C6 7 0 13 1 20c1 7 9 10 16 9 8-1 13-7 12-13-1-6-7-9-14-9z" fill="#d6e4f2" stroke="#8aa4c0" /><circle cx="9" cy="14" r="2.500" fill="#e64a3a" /><circle cx="15" cy="11" r="2.500" fill="#f5c518" /><circle cx="7" cy="21" r="2.500" fill="#3aa64a" /><circle cx="14" cy="25" r="2.500" fill="#3a7ae6" /><path d="M34 1L20 32" stroke="#d08a2a" strokeWidth="3" /><path d="M32 0l3 2-3 7-3-2z" fill="#b06a1a" /></svg>
          Untitled - Pai...
        </AppBtn>
        <Tray>
          <TrayIcon $ml={21}><svg width="18" height="10"><path d="M1 9.500l8-8 8 8" fill="none" stroke="#eee" strokeWidth="1.400" /></svg></TrayIcon>
          <TrayIcon $ml={15}><svg width="24" height="20"><path d="M2 1v4M6 1v4M0 5h8v3H0zM4 8v6h2" fill="none" stroke="#eee" /><rect x="4.500" y="5.500" width="18" height="12" fill="#1f1917" stroke="#eee" /><rect x="6" y="7" width="15" height="9" fill="#eee" /></svg></TrayIcon>
          <TrayIcon $ml={13}><svg width="24" height="24"><path d="M.5 2.500h22v15H.5zM11.500 17.500v4M6 22h11" fill="none" stroke="#eee" /><rect x=".5" y=".5" width="7" height="8" fill="#1f1917" stroke="#eee" /><rect x="3" y="3" width="2" height="2" fill="#eee" /></svg></TrayIcon>
          <TrayIcon $ml={12}><svg width="23" height="24"><path d="M1 8h4l6-6v20l-6-6H1z" fill="none" stroke="#eee" /><path d="M14 8c2 2 2 6 0 8M17 5c3.500 4 3.500 10 0 14M20 3c4 5 4 13 0 18" fill="none" stroke="#eee" /></svg></TrayIcon>
          <TrayIcon $ml={15}>ENG</TrayIcon>
          <Clock><span>16:50</span><span>14-07-2020</span></Clock>
          <Notify>
            <svg width="24" height="26" viewBox="0 0 24 26"><path d="M0 0h24v18H15l-5 7v-7H0z" fill="#fff" /><path d="M4 5h16M4 9h16M4 13h10" stroke="#222" /></svg>
            <Badge>6</Badge>
          </Notify>
        </Tray>
      </Taskbar>
    </Screen>
  );
}
